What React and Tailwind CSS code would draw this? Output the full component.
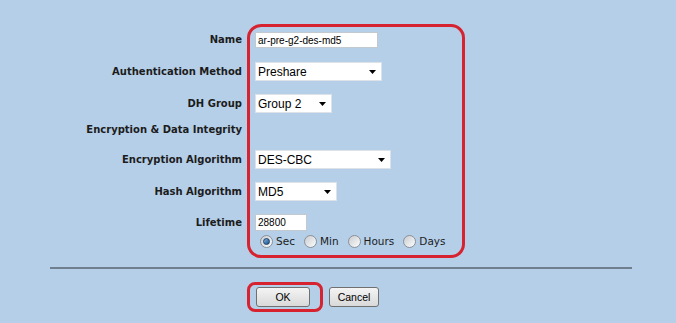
import React from "react";

const rows = [
  { label: "Name", box: "h-[16px]" },
  { label: "Authentication Method", box: "h-[19px] mt-[14px]" },
  { label: "DH Group", box: "h-[19px] mt-[13px]" },
  { label: "Encryption & Data Integrity", box: "h-[14px] mt-[10px]" },
  { label: "Encryption Algorithm", box: "h-[19px] mt-[13px]" },
  { label: "Hash Algorithm", box: "h-[19px] mt-[13px]" },
  { label: "Lifetime", box: "h-[17px] mt-[13px]" },
];

const label = { fontFamily: "'DejaVu Sans', sans-serif" };
const ui = { fontFamily: "'Liberation Sans', Arial, sans-serif" };

const TextBox = ({ value, className }) => (
  <div
    className={`flex items-center bg-white border border-[#c3c9d1] pl-[2px] text-[10px] text-black ${className}`}
    style={ui}
  >
    {value}
  </div>
);

const Select = ({ value, className }) => (
  <div
    className={`flex items-center justify-between bg-white border border-[#dde2e8] pl-[2px] pr-[5px] text-[12px] text-black ${className}`}
    style={ui}
  >
    <span>{value}</span>
    <svg width="7" height="4" viewBox="0 0 7 4">
      <polygon points="0,0 7,0 3.5,4" fill="#000" />
    </svg>
  </div>
);

const Radio = ({ checked, text }) => (
  <div className="flex items-center gap-[3px]">
    <span className="w-[13px] h-[13px] rounded-full border border-[#8a9099] bg-gradient-to-br from-[#c9ccd0] to-[#fdfdfd] flex items-center justify-center">
      {checked && (
        <span className="w-[7px] h-[7px] rounded-full bg-gradient-to-br from-[#7fb4e0] to-[#1b4f86] border border-[#173f6a]" />
      )}
    </span>
    <span className="text-[10.5px] text-[#1c1c1c] leading-none" style={label}>
      {text}
    </span>
  </div>
);

const Button = ({ children, className }) => (
  <button
    className={`block h-[20px] rounded-[3px] border border-[#707070] bg-gradient-to-b from-[#f4f4f4] to-[#d9d9d9] text-[10.5px] leading-none text-black ${className}`}
    style={ui}
  >
    {children}
  </button>
);

export default function App() {
  return (
    <div className="w-[676px] h-[323px] bg-[#b5cfe9] overflow-hidden pt-[24px]">
      <div className="flex">
        {/* labels */}
        <div className="w-[242px] flex flex-col pt-[8px]">
          {rows.map((r) => (
            <div
              key={r.label}
              className={`flex items-center justify-end text-[10px] font-bold text-[#1c1c1c] leading-none whitespace-nowrap ${r.box}`}
              style={label}
            >
              {r.label}
            </div>
          ))}
        </div>

        {/* highlighted controls */}
        <div className="ml-[5px] w-[218px] border-[3px] border-[#d7232f] rounded-[14px] pt-[5px] pl-[5px] pb-[7px] flex flex-col items-start">
          <TextBox value="ar-pre-g2-des-md5" className="w-[123px] h-[16px]" />
          <Select value="Preshare" className="w-[127px] h-[19px] mt-[14px]" />
          <Select value="Group 2" className="w-[77px] h-[19px] mt-[13px]" />
          <div className="h-[14px] mt-[10px]" />
          <Select value="DES-CBC" className="w-[136px] h-[19px] mt-[13px]" />
          <Select value="MD5" className="w-[82px] h-[19px] mt-[13px]" />
          <TextBox value="28800" className="w-[52px] h-[17px] mt-[13px]" />
          <div className="flex items-center gap-[9px] h-[13px] mt-[4px] pl-[5px]">
            <Radio checked text="Sec" />
            <Radio text="Min" />
            <Radio text="Hours" />
            <Radio text="Days" />
          </div>
        </div>
      </div>

      <div className="ml-[50px] w-[582px] h-[2px] bg-[#6f7f8e] mt-[9px]" />

      <div className="flex items-center mt-[13px] pl-[247px]">
        <div className="flex border-[3px] border-[#d7232f] rounded-[8px] pl-[6px] pr-[10px] py-[2px]">
          <Button className="w-[54px]">OK</Button>
        </div>
        <Button className="w-[50px] ml-[6px]">Cancel</Button>
      </div>
    </div>
  );
}
